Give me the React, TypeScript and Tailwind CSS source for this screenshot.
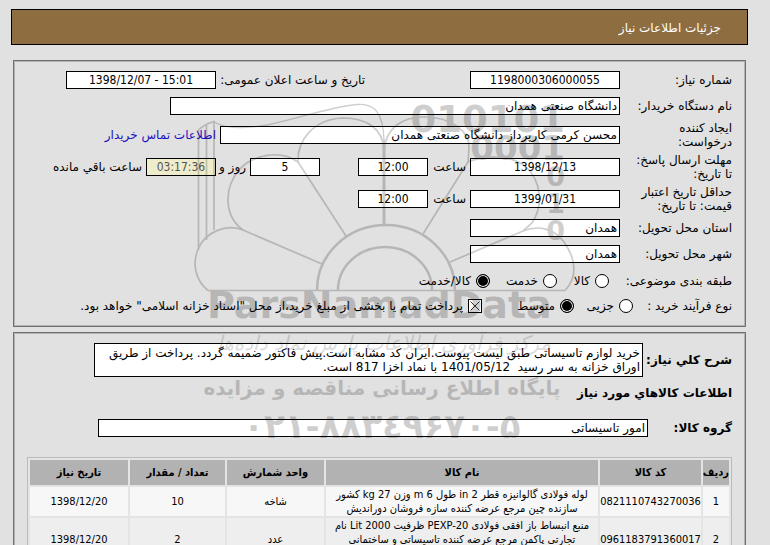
import { InputHTMLAttributes, ReactNode } from 'react'
import { twMerge } from 'tailwind-merge'

const items = [
  {
    code: '0821110743270036',
    name: ['لوله فولادی گالوانیزه قطر 2 in طول 6 m وزن 27 kg کشور', 'سازنده چین مرجع عرضه کننده سازه فروشان دوراندیش'],
    unit: 'شاخه',
    amount: '10',
    date: '1398/12/20',
  },
  {
    code: '0961183791360017',
    name: ['منبع انبساط باز افقی فولادی PEXP-20 ظرفیت 2000 Lit نام', 'تجارتی پاکمن مرجع عرضه کننده تاسیساتی و ساختمانی'],
    unit: 'عدد',
    amount: '2',
    date: '1398/12/20',
  },
]

function Field({ className, ...props }: InputHTMLAttributes<HTMLInputElement>) {
  return (
    <input
      readOnly
      className={twMerge(
        'h-[18px] w-[150px] shrink-0 border border-black bg-white px-0.5 text-[12px] leading-4 text-black outline-none',
        className,
      )}
      {...props}
    />
  )
}

// numbers and dates, centred in the box
function NumberField({ className, ...props }: InputHTMLAttributes<HTMLInputElement>) {
  return (
    <Field
      dir="ltr"
      className={twMerge("text-center font-['DejaVu_Sans_Condensed','DejaVu_Sans',sans-serif]", className)}
      {...props}
    />
  )
}

function Row({ id, label, className, children }: { id?: string; label: string; className?: string; children: ReactNode }) {
  return (
    <div className={twMerge('flex h-[26px] items-center', className)}>
      <label htmlFor={id} className="w-28 shrink-0 whitespace-pre leading-[14px]">
        {label}
      </label>
      {children}
    </div>
  )
}

function Choice({ name, label, checked, className }: { name: string; label: string; checked?: boolean; className?: string }) {
  return (
    <label className={twMerge('flex shrink-0 items-center gap-[5px] whitespace-nowrap', className)}>
      <input
        type="radio"
        name={name}
        defaultChecked={checked}
        className="size-[14px] shrink-0 appearance-none rounded-full border border-black bg-white checked:bg-black checked:shadow-[inset_0_0_0_1px_white]"
      />
      {label}
    </label>
  )
}

function Watermark() {
  return (
    <div className="pointer-events-none absolute inset-x-0 top-[90px] flex justify-center opacity-20" aria-hidden="true">
      <svg width="400" height="360" viewBox="185 90 400 360" fill="none" stroke="#111" strokeWidth="1.7">
        <path d="M198.500 250V130Q205 124 214 121.500V230M206.500 240V125" />
        <path d="M214 122C226 129 245 129 267 125C300 118 330 107 357 104.500C374 103 383 112 384 140" strokeWidth="1.3" />
        <path d="M346 236L298 162C297 140 314 119 343 118C366 118 383 128 384 150" />
        <path d="M384 150C386 128 402 117 424 117C452 117 470 132 469 148L468 162L423 234" />
        <path d="M384 140V225" strokeWidth="3" />
        <path d="M298 162C280 149 253 155 240 169C223 188 224 216 243 230L322 264" />
        <path d="M243 230C225 223 206 233 199 247C191 264 196 281 208 290.500" />
        <path d="M468 162C486 154 512 155 526 167C541 181 544 205 532 223L523 231L450 262" />
        <path d="M523 231C540 224 555 230 564 242C576 259 578 277 565 290.500" />
        <path d="M208 290.500H565" strokeWidth="1.3" />
        <path d="M317 290A69 65 0 0 1 455 290M338 290A47 43 0 0 1 432 290" strokeWidth="2.500" />
        <g fill="#111" stroke="none" direction="ltr" fontFamily="'DejaVu Sans', sans-serif" fontWeight="bold">
          <g textAnchor="end">
            <text x="565" y="132" fontSize="37">
              010101
            </text>
            <text x="565" y="160" fontSize="34">
              0001
            </text>
            <text x="565" y="186" fontSize="27">
              0
            </text>
            <text x="565" y="213" fontSize="27">
              1
            </text>
            <text x="565" y="240" fontSize="27">
              0
            </text>
          </g>
          <text x="207" y="318" fontSize="38">
            ParsNamadData
          </text>
        </g>
        <g fill="#111" stroke="none" direction="rtl" textAnchor="middle" fontFamily="'DejaVu Sans', sans-serif">
          <text x="384" y="350" fontSize="20" fontStyle="italic" opacity="0.7">
            مرکز فرآوری اطلاعات پارس نماد داده‌ها
          </text>
          <text x="382" y="395" fontSize="20" fontWeight="bold">
            پایگاه اطلاع رسانی مناقصه و مزایده
          </text>
          <text x="382" y="438" fontSize="34" fontWeight="bold" direction="ltr">
            ۰۲۱-۸۸۳٤۹۶۷۰-۵
          </text>
        </g>
      </svg>
    </div>
  )
}

const panel = 'mx-0.5 border border-[#707070] px-[13px] shadow-[inset_0_0_0_1px_#b4b4b4]'
const th = 'bg-[#b2b2b2] p-0 font-bold'
const td = 'p-0 text-center'

export default function App() {
  return (
    <div
      dir="rtl"
      className="relative h-screen overflow-hidden bg-[#e1e1e1] pt-[9px] pr-[22px] pl-[11px] font-['DejaVu_Sans',sans-serif] text-[12px] leading-[14px] text-black"
    >
      <header className="flex h-9 items-center border border-black bg-[#8e6d40] px-[26px] pt-0.5">
        <h1 className="text-[12px] text-white">جزئیات اطلاعات نیاز</h1>
      </header>

      <section className={`${panel} mt-[15px] pt-1.5 pb-[9px]`}>
        <Row id="number" label="شماره نیاز:">
          <NumberField id="number" defaultValue="1198000306000055" />
          <label htmlFor="announced" className="ms-[105px] w-[149px] shrink-0 whitespace-nowrap">
            تاریخ و ساعت اعلان عمومی:
          </label>
          <NumberField id="announced" defaultValue="1398/12/07 - 15:01" />
        </Row>
        <Row id="buyer" label="نام دستگاه خریدار:">
          <Field id="buyer" className="w-[450px]" defaultValue="دانشگاه صنعتی همدان" />
        </Row>
        <Row id="creator" label={'ایجاد کننده\nدرخواست:'} className="h-8">
          <Field id="creator" className="w-[400px]" defaultValue="محسن کرمی کارپرداز دانشگاه صنعتی همدان" />
          <a href="#contact" className="ms-1 whitespace-nowrap text-[#1a10c0]">
            اطلاعات تماس خریدار
          </a>
        </Row>
        <Row id="deadline" label={'مهلت ارسال پاسخ:\nتا تاریخ:'} className="h-8">
          <NumberField id="deadline" defaultValue="1398/12/13" />
          <label htmlFor="deadline-time" className="ms-1 w-[38px]">
            ساعت
          </label>
          <NumberField id="deadline-time" className="w-[70px]" defaultValue="12:00" />
          <NumberField id="days" aria-label="روز" className="mr-[38px] w-[70px]" defaultValue="5" />
          <label htmlFor="remaining" className="ms-1 w-[30px] whitespace-nowrap">
            روز و
          </label>
          <NumberField id="remaining" className="w-[70px] bg-[#eeeccb] text-[#555]" defaultValue="03:17:36" />
          <span className="ms-1 whitespace-nowrap">ساعت باقي مانده</span>
        </Row>
        <Row id="validity" label={'حداقل تاریخ اعتبار\nقیمت: تا تاریخ:'} className="h-8">
          <NumberField id="validity" defaultValue="1399/01/31" />
          <label htmlFor="validity-time" className="ms-1 w-[38px]">
            ساعت
          </label>
          <NumberField id="validity-time" className="w-[70px]" defaultValue="12:00" />
        </Row>
        <Row id="province" label="استان محل تحویل:">
          <Field id="province" defaultValue="همدان" />
        </Row>
        <Row id="city" label="شهر محل تحویل:">
          <Field id="city" defaultValue="همدان" />
        </Row>
        <Row label="طبقه بندی موضوعی:" className="h-7">
          <Choice name="subject" label="کالا" className="ms-[11px] w-[52px]" />
          <Choice name="subject" label="خدمت" className="w-[67px]" />
          <Choice name="subject" label="کالا/خدمت" checked />
        </Row>
        <div className="flex h-[22px] items-center">
          <span className="w-[99px] shrink-0 whitespace-nowrap">نوع فرآیند خرید :</span>
          <Choice name="process" label="جزیی" className="w-[59px]" />
          <Choice name="process" label="متوسط" checked className="w-[92px]" />
          <label className="flex items-center gap-[5px] whitespace-nowrap">
            <span className="grid size-[14px] shrink-0">
              <input
                type="checkbox"
                defaultChecked
                className="peer col-start-1 row-start-1 size-[14px] appearance-none border border-black bg-white"
              />
              <svg
                viewBox="0 0 14 14"
                className="pointer-events-none col-start-1 row-start-1 hidden size-[14px] peer-checked:block"
                stroke="black"
                strokeWidth="0.8"
              >
                <path d="M2.5 2.5l9 9M11.5 2.5l-9 9" />
              </svg>
            </span>
            پرداخت تمام یا بخشی از مبلغ خرید،از محل "اسناد خزانه اسلامی" خواهد بود.
          </label>
        </div>
      </section>

      <section className={`${panel} mt-[5px] pt-2.5 pb-3`}>
        <div className="flex items-center">
          <label htmlFor="summary" className="w-[89px] shrink-0 font-bold whitespace-nowrap">
            شرح کلي نیاز:
          </label>
          <textarea
            id="summary"
            readOnly
            className="h-[34px] w-[549px] shrink-0 resize-none overflow-hidden border border-black bg-white px-0.5 pt-0.5 leading-[14px] whitespace-pre outline-none"
            defaultValue={
              'خرید لوازم تاسیساتی طبق لیست پیوست.ایران کد مشابه است.پیش فاکتور ضمیمه گردد. پرداخت از طریق\nاوراق خزانه به سر رسید  1401/05/12 با نماد اخزا 817 است.'
            }
          />
        </div>
        <h2 className="mt-[9px] font-bold">اطلاعات کالاهاي مورد نیاز</h2>
        <div className="mt-[19px] flex items-center">
          <label htmlFor="group" className="w-[84px] shrink-0 font-bold">
            گروه کالا:
          </label>
          <Field id="group" className="w-[550px]" defaultValue="امور تاسیساتی" />
        </div>

        <table className="mt-5 w-full table-fixed border-separate border-spacing-0.5 border border-[#bbb] bg-[#e4e4e4] font-['DejaVu_Sans_Condensed','DejaVu_Sans',sans-serif] text-[11px]">
          <colgroup>
            <col className="w-[26px]" />
            <col className="w-[101px]" />
            <col />
            <col className="w-[97px]" />
            <col className="w-[95px]" />
            <col className="w-[98px]" />
          </colgroup>
          <thead>
            <tr className="h-[25px]">
              <th className={th}>ردیف</th>
              <th className={th}>کد کالا</th>
              <th className={th}>نام کالا</th>
              <th className={th}>واحد شمارش</th>
              <th className={th}>تعداد / مقدار</th>
              <th className={th}>تاریخ نیاز</th>
            </tr>
          </thead>
          <tbody>
            {items.map((item, i) => (
              <tr key={item.code} className="h-[29px] bg-[#f7f7f7] even:h-[43px] even:bg-[#eee]">
                <td className={td}>{i + 1}</td>
                <td className={td}>{item.code}</td>
                <td className="px-0 pt-px pb-0 text-center align-top whitespace-nowrap">
                  {item.name.map((line) => (
                    <div key={line}>{line}</div>
                  ))}
                </td>
                <td className={td}>{item.unit}</td>
                <td className={td}>{item.amount}</td>
                <td className={td}>{item.date}</td>
              </tr>
            ))}
          </tbody>
        </table>
      </section>

      <Watermark />
    </div>
  )
}
